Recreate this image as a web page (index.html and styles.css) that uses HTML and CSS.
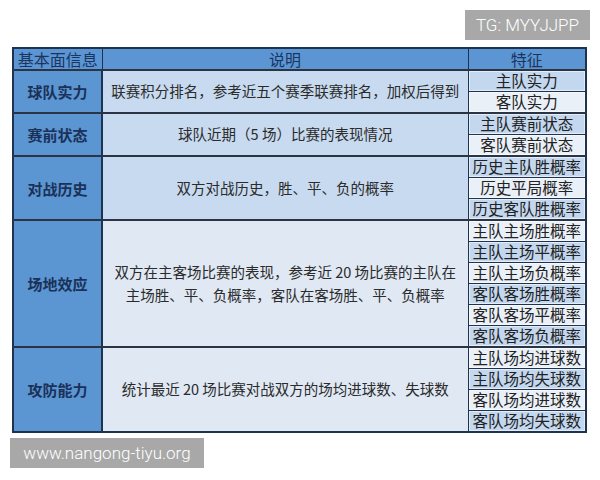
FILE: index.html
```html
<!DOCTYPE html>
<html lang="zh-CN">
<head>
<meta charset="utf-8">
<title>基本面信息</title>
<link rel="stylesheet" href="styles.css">
</head>
<body>
<div class="page">
  <div class="top"><span class="tag">TG: MYYJJPP</span></div>
  <table class="grid">
    <colgroup><col class="c1"><col class="c2"><col class="c3"></colgroup>
    <thead>
      <tr><th>基本面信息</th><th>说明</th><th>特征</th></tr>
    </thead>
    <tbody class="grp">
      <tr><td class="cat" rowspan="2">球队实力</td><td class="desc dark" rowspan="2">联赛积分排名，参考近五个赛季联赛排名，加权后得到</td><td class="f b">主队实力</td></tr>
      <tr><td class="f l">客队实力</td></tr>
    </tbody>
    <tbody class="grp">
      <tr><td class="cat" rowspan="2">赛前状态</td><td class="desc dark" rowspan="2">球队近期（5 场）比赛的表现情况</td><td class="f b">主队赛前状态</td></tr>
      <tr><td class="f l">客队赛前状态</td></tr>
    </tbody>
    <tbody class="grp">
      <tr><td class="cat" rowspan="3">对战历史</td><td class="desc dark" rowspan="3">双方对战历史，胜、平、负的概率</td><td class="f b">历史主队胜概率</td></tr>
      <tr><td class="f l">历史平局概率</td></tr>
      <tr><td class="f b">历史客队胜概率</td></tr>
    </tbody>
    <tbody class="grp">
      <tr><td class="cat" rowspan="6">场地效应</td><td class="desc pale" rowspan="6">双方在主客场比赛的表现，参考近 20 场比赛的主队在<br>主场胜、平、负概率，客队在客场胜、平、负概率</td><td class="f l">主队主场胜概率</td></tr>
      <tr><td class="f b">主队主场平概率</td></tr>
      <tr><td class="f l">主队主场负概率</td></tr>
      <tr><td class="f b">客队客场胜概率</td></tr>
      <tr><td class="f l">客队客场平概率</td></tr>
      <tr><td class="f b">客队客场负概率</td></tr>
    </tbody>
    <tbody class="grp">
      <tr><td class="cat" rowspan="4">攻防能力</td><td class="desc pale" rowspan="4">统计最近 20 场比赛对战双方的场均进球数、失球数</td><td class="f l">主队场均进球数</td></tr>
      <tr><td class="f b">主队场均失球数</td></tr>
      <tr><td class="f l">客队场均进球数</td></tr>
      <tr><td class="f b">客队场均失球数</td></tr>
    </tbody>
  </table>
  <div class="foot"><span class="site">www.nangong-tiyu.org</span></div>
</div>
</body>
</html>
```

FILE: styles.css
```css
html, body {
  margin: 0;
  padding: 0;
  background: #ffffff;
}

.page {
  width: 600px;
  height: 480px;
  padding-top: 10px;
  box-sizing: border-box;
  font-family: "Noto Sans CJK SC", "Noto Sans", sans-serif;
}

.top {
  display: flex;
  justify-content: flex-end;
  padding-right: 10px;
  height: 30px;
}

.tag {
  display: flex;
  align-items: center;
  justify-content: center;
  width: 125px;
  height: 30px;
  background: #a8a8a8;
  color: #ffffff;
  font-family: Roboto, "Liberation Sans", sans-serif;
  font-size: 17px;
  font-weight: 300;
}

.grid {
  margin: 7px 0 0 12px;
  width: 573px;
  border-collapse: collapse;
  table-layout: fixed;
  border: 2px solid #1e3350;
}

.c1 { width: 89px; }
.c2 { width: 366px; }
.c3 { width: 118px; }

.grid th,
.grid td {
  padding: 0;
  height: 20px;
  text-align: center;
  vertical-align: middle;
  line-height: 1;
  border: 1px solid #1e3350;
}

.grid th {
  background: #5c95d3;
  color: #1b3561;
  font-size: 16px;
  font-weight: 400;
}

.grp {
  border-top: 2px solid #2a3442;
}

.grid .cat {
  background: #5b95d2;
  color: #1a3158;
  font-size: 15px;
  font-weight: 700;
  border-right: 2px solid #1e3350;
}

.grid .desc {
  color: #2b2b2b;
  font-size: 14.5px;
  line-height: 1.55;
  border-right: 1px solid #1e3350;
}

.grid .desc.dark { background: #c7daef; }
.grid .desc.pale { background: #dfe8f3; }

.grid .f {
  font-size: 15.5px;
  color: #222;
  box-shadow: inset 0 0 0 1px rgba(255, 255, 255, 0.55);
}

.grid .f.b { background: #c3d7ee; }
.grid .f.l { background: #eaf0f7; }

.foot {
  margin: 5px 0 0 10px;
}

.site {
  display: inline-flex;
  align-items: center;
  justify-content: center;
  width: 194px;
  height: 30px;
  background: #a8a8a8;
  color: #ffffff;
  font-family: Roboto, "Liberation Sans", sans-serif;
  font-size: 17px;
  font-weight: 300;
}
```
